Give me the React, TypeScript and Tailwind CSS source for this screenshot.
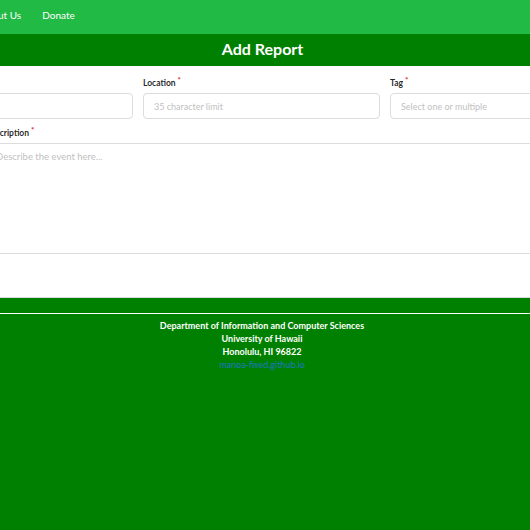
import React from 'react';

const Label: React.FC<{ text: string; className?: string }> = ({ text, className = '' }) => (
  <label
    className={`block h-[14px] text-[8.5px] leading-[14px] font-bold text-[rgba(0,0,0,0.87)] mb-[3px] ${className}`}
  >
    {text}
    <span className="relative top-[-3px] text-[#db2828] text-[8px] ml-[2px] leading-none">*</span>
  </label>
);

const inputClass =
  'block w-full h-[26px] px-[10px] text-[9px] border border-[#dcdcdc] rounded-[4px] bg-white outline-none placeholder:text-[#bfbfbf]';

export default function App() {
  return (
    <div className="min-h-[530px] flex flex-col bg-white font-['Lato','Open_Sans',sans-serif] overflow-hidden">
      <nav className="h-[34px] shrink-0 bg-[#21ba45] flex items-center pb-[3px]">
        <div className="flex items-center gap-[21px] ml-[-20px] text-[10px] text-white">
          <span>About Us</span>
          <span>Donate</span>
        </div>
      </nav>

      <div className="h-[32px] shrink-0 bg-[#008000] flex items-center justify-center pb-[3px]">
        <h2 className="text-[16px] leading-[20px] font-bold text-white mr-[5px]">Add Report</h2>
      </div>

      <div className="shrink-0 flex justify-center border-b border-[#d9d9d9]">
        <form className="w-[731px] mr-[7px] shrink-0 pt-[10px] pb-[43px]">
          <div className="grid grid-cols-3 gap-x-[10px]">
            <div>
              <Label text="Title" />
              <input className={inputClass} placeholder="" />
            </div>
            <div>
              <Label text="Location" />
              <input className={inputClass} placeholder="35 character limit" />
            </div>
            <div>
              <Label text="Tag" />
              <input className={inputClass} placeholder="Select one or multiple" />
            </div>
          </div>
          <div className="mt-[7px] pl-[89px]">
            <Label text="Description" />
            <textarea
              className="block w-full h-[111px] px-[10px] py-[6px] text-[9.5px] border border-[#dcdcdc] rounded-[4px] resize-none outline-none placeholder:text-[#bfbfbf]"
              placeholder="Describe the event here..."
            />
          </div>
        </form>
      </div>

      <footer className="flex-1 bg-[#008000] pt-[15px] pb-[20px]">
        <hr className="border-0 border-t border-white" />
        <div className="mt-[5px] text-center text-[9px] leading-[13px] font-bold text-white mr-[6px]">
          <div>Department of Information and Computer Sciences</div>
          <div>University of Hawaii</div>
          <div>Honolulu, HI 96822</div>
          <div className="font-normal text-[#1a78c2]">manoa-fixed.github.io</div>
        </div>
      </footer>
    </div>
  );
}
